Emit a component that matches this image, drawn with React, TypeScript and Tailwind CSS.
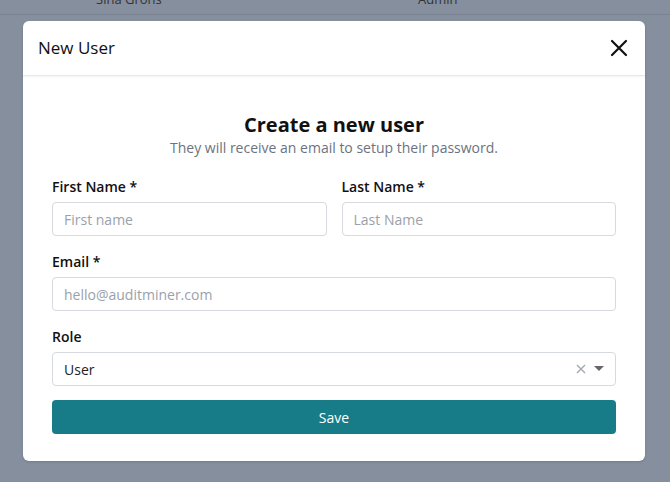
import React from "react";

export default function App() {
  const font = { fontFamily: '"Open Sans", "Noto Sans", sans-serif' };
  const input = "h-[34px] w-full rounded border border-[#d6d9de] px-[11px] text-[14px] text-[#222] placeholder:text-[#9aa1ab] outline-none";
  return (
    <div className="h-[482px] w-[670px] overflow-hidden bg-[#868f9e]" style={font}>
      <div className="h-[15px] border-b border-[#7a8392] relative overflow-hidden">
        <div className="absolute top-[-10px] left-[96px] text-[13px] text-[#333]">Sina Grohs</div>
        <div className="absolute top-[-10px] left-[418px] text-[13px] text-[#333]">Admin</div>
      </div>
      <div className="mx-[23px] mt-[6px] h-[440px] w-[622px] rounded-md bg-white shadow">
        <div className="flex h-[55px] items-center justify-between border-b border-[#e6e8eb] pl-[15px] pr-[16px] shadow-[0_1px_2px_rgba(0,0,0,0.05)]">
          <span className="text-[17px] text-[#111]">New User</span>
          <svg width="20" height="20" viewBox="0 0 20 20"><path d="M3 3L17 17M17 3L3 17" stroke="#111" strokeWidth="2.2" strokeLinecap="round" /></svg>
        </div>
        <div className="px-[29px] pt-[36px]">
          <div className="text-center text-[20px] font-bold leading-[26px] text-[#111]">Create a new user</div>
          <div className="text-center text-[14px] leading-[20px] text-[#6b7380]">They will receive an email to setup their password.</div>
          <div className="mt-[19px] grid grid-cols-2 gap-x-[15px]">
            <div>
              <label className="block text-[14px] font-semibold leading-[20px] text-[#111]">First Name *</label>
              <input className={input + " mt-[5px]"} placeholder="First name" />
            </div>
            <div>
              <label className="block text-[14px] font-semibold leading-[20px] text-[#111]">Last Name *</label>
              <input className={input + " mt-[5px]"} placeholder="Last Name" />
            </div>
          </div>
          <label className="mt-[16px] block text-[14px] font-semibold leading-[20px] text-[#111]">Email *</label>
          <input className={input + " mt-[5px]"} placeholder="hello@auditminer.com" />
          <label className="mt-[16px] block text-[14px] font-semibold leading-[20px] text-[#111]">Role</label>
          <div className={input + " mt-[5px] flex items-center justify-between"}>
            <span>User</span>
            <div className="flex items-center gap-[8px]">
              <svg width="10" height="10" viewBox="0 0 10 10"><path d="M1 1L9 9M9 1L1 9" stroke="#a3a8b0" strokeWidth="1.4" /></svg>
              <svg width="10" height="6" viewBox="0 0 10 6"><path d="M0 0H10L5 5Z" fill="#666" /></svg>
            </div>
          </div>
          <button className="mt-[14px] h-[34px] w-full rounded bg-[#177c88] text-[14px] text-white">Save</button>
        </div>
      </div>
    </div>
  );
}
